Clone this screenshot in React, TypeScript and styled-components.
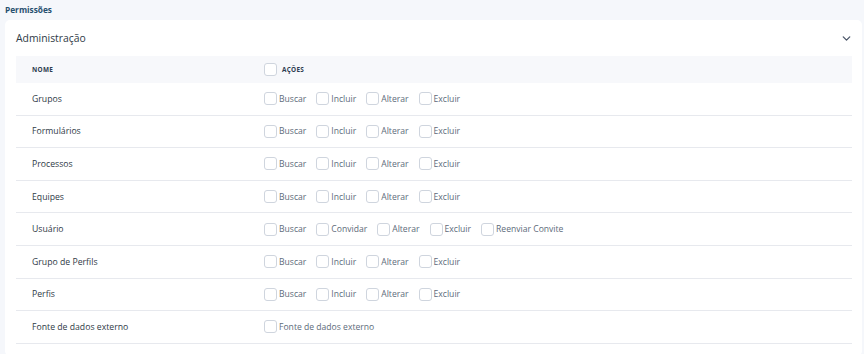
import React from "react";
import styled, { createGlobalStyle } from "styled-components";

const Global = createGlobalStyle`
  html, body { margin: 0; padding: 0; background: #f5f7fb; }
  body { font-family: "Open Sans", "Noto Sans", sans-serif; }
`;

const Page = styled.div`
  width: 864px;
  height: 354px;
  overflow: hidden;
  padding: 3px 2px 0 5px;
  box-sizing: border-box;
`;

const Title = styled.div`
  font-size: 8.3px;
  font-weight: 700;
  color: #27506f;
  height: 17px;
  line-height: 14px;
`;

const Card = styled.div`
  background: #ffffff;
  border-radius: 5px;
  padding: 0 10px 12px 11px;
`;

const CardHeader = styled.div`
  display: flex;
  align-items: center;
  justify-content: space-between;
  height: 36px;
`;

const CardTitle = styled.div`
  font-size: 10.4px;
  color: #2f3a46;
`;

const Chevron = styled.svg`
  width: 13px;
  height: 13px;
  margin-right: -1px;
`;

const Table = styled.div`
  display: flex;
  flex-direction: column;
`;

const Row = styled.div<{ $head?: boolean }>`
  display: grid;
  grid-template-columns: 248px 1fr;
  align-items: center;
  height: ${(p) => (p.$head ? "27px" : "32.6px")};
  background: ${(p) => (p.$head ? "#f7f8fb" : "transparent")};
  border-bottom: ${(p) => (p.$head ? "none" : "1px solid #e7e9ee")};
  box-sizing: border-box;
`;

const NameCell = styled.div<{ $head?: boolean }>`
  padding-left: 16px;
  font-size: ${(p) => (p.$head ? "6.4px" : "8.7px")};
  font-weight: ${(p) => (p.$head ? 700 : 500)};
  color: ${(p) => (p.$head ? "#2d3c50" : "#2f3a46")};
  letter-spacing: ${(p) => (p.$head ? "0.3px" : "0")};
`;

const Actions = styled.div`
  display: flex;
  align-items: center;
  gap: 10px;
`;

const Option = styled.label`
  display: flex;
  align-items: center;
  gap: 2px;
  font-size: 8.6px;
  color: #5d6b7a;
`;

const Box = styled.span`
  display: inline-block;
  width: 11px;
  height: 11px;
  border: 1px solid #cfd5de;
  border-radius: 3px;
  background: #fff;
`;

const HeadLabel = styled.span`
  font-size: 6.4px;
  font-weight: 700;
  color: #2d3c50;
  letter-spacing: 0.3px;
  margin-left: 3px;
`;

const std = ["Buscar", "Incluir", "Alterar", "Excluir"];
const rows: { name: string; actions: string[] }[] = [
  { name: "Grupos", actions: std },
  { name: "Formulários", actions: std },
  { name: "Processos", actions: std },
  { name: "Equipes", actions: std },
  { name: "Usuário", actions: ["Buscar", "Convidar", "Alterar", "Excluir", "Reenviar Convite"] },
  { name: "Grupo de Perfils", actions: std },
  { name: "Perfis", actions: std },
  { name: "Fonte de dados externo", actions: ["Fonte de dados externo"] },
];

export default function App() {
  return (
    <Page>
      <Global />
      <Title>Permissões</Title>
      <Card>
        <CardHeader>
          <CardTitle>Administração</CardTitle>
          <Chevron viewBox="0 0 24 24" fill="none" stroke="#4a5568" strokeWidth="2.4" strokeLinecap="round" strokeLinejoin="round">
            <path d="M6 9l6 6 6-6" />
          </Chevron>
        </CardHeader>
        <Table>
          <Row $head>
            <NameCell $head>NOME</NameCell>
            <Actions>
              <Option>
                <Box />
                <HeadLabel>AÇÕES</HeadLabel>
              </Option>
            </Actions>
          </Row>
          {rows.map((r) => (
            <Row key={r.name}>
              <NameCell>{r.name}</NameCell>
              <Actions>
                {r.actions.map((a) => (
                  <Option key={a}>
                    <Box />
                    {a}
                  </Option>
                ))}
              </Actions>
            </Row>
          ))}
        </Table>
      </Card>
    </Page>
  );
}
